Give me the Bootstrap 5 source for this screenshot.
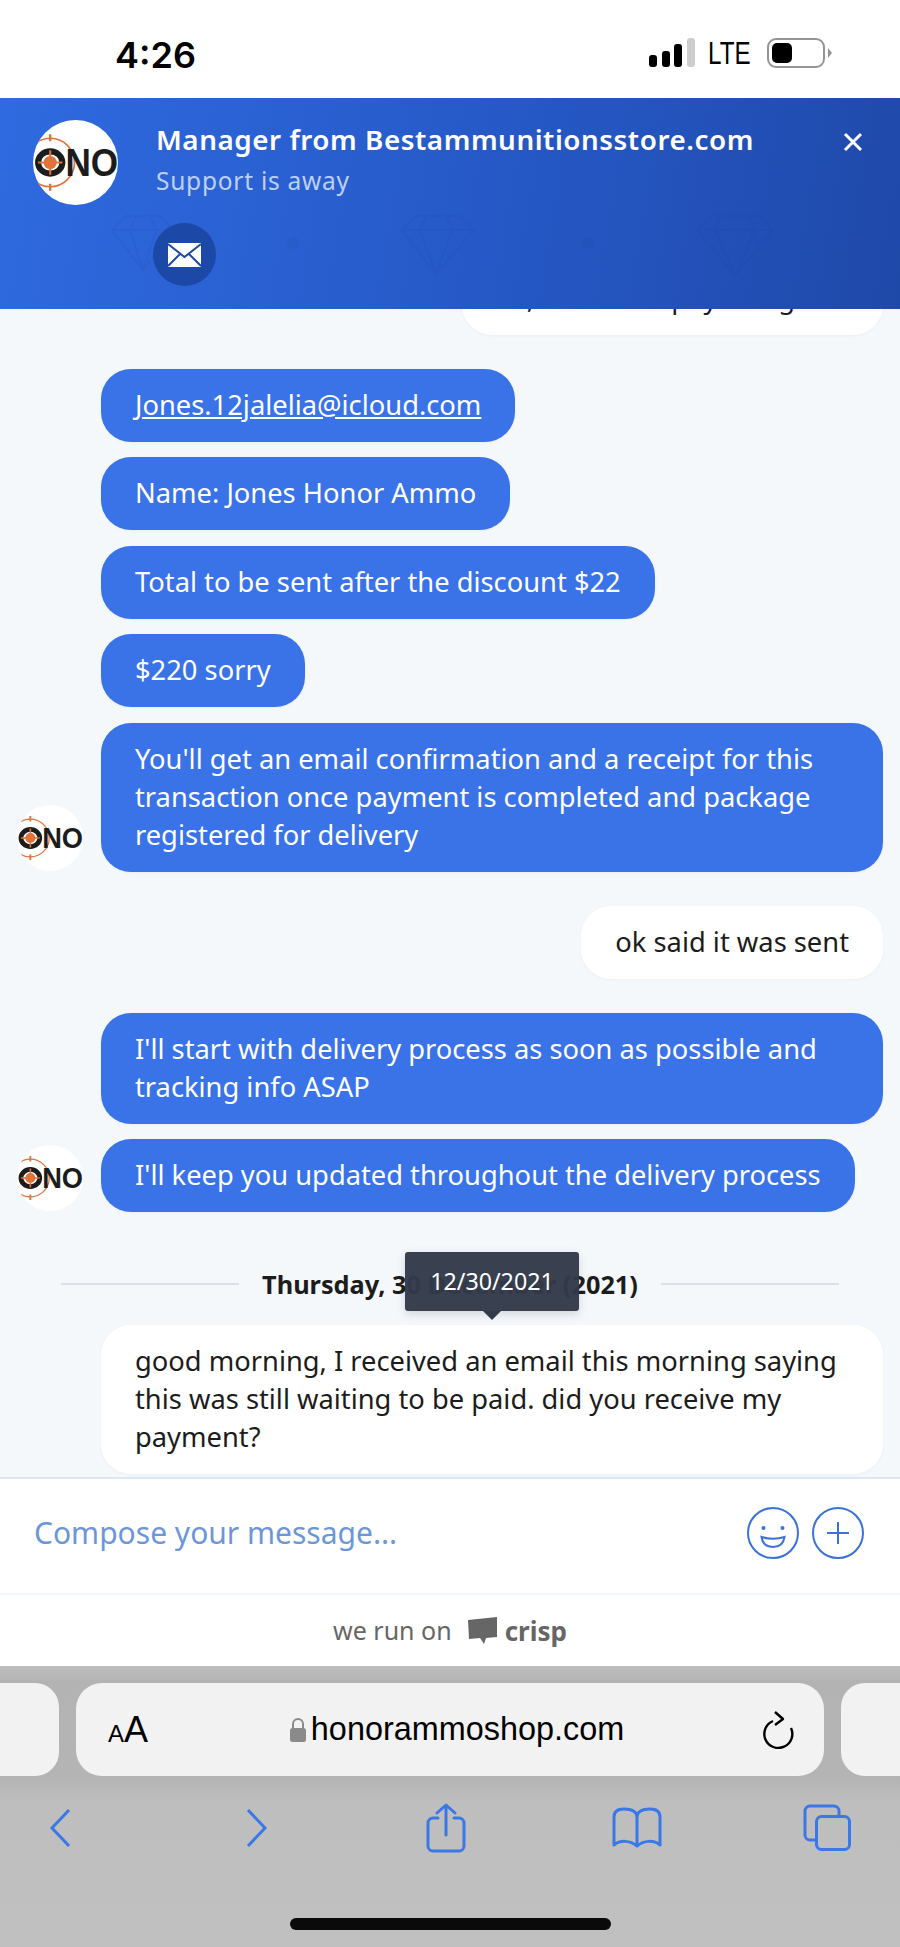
<!DOCTYPE html>
<html lang="en">
<head>
    <meta charset="UTF-8">
    <title>Chat</title>
    <link href="https://cdn.jsdelivr.net/npm/bootstrap@5.3.0/dist/css/bootstrap.min.css" rel="stylesheet">
    <style>
        html, body { height: 1947px; overflow: hidden; }
        body { font-family: "Noto Sans", sans-serif; background: #fff; }
        .screen { height: 1947px; }

        .status-bar { height: 98px; padding: 0 68px 0 115px; font-family: Inter, sans-serif; color: #000; }
        .status-time { font-size: 36px; font-weight: 600; line-height: 1; margin-top: 12px; }
        .status-icons { margin-top: 8px; }
        .status-lte { font-family: "Liberation Sans", sans-serif; font-size: 31px; line-height: 1; width: 45px; margin: 0 14px 0 13px; transform: scaleX(.78); transform-origin: left center; }

        .chat-head { height: 211px; background: linear-gradient(100deg, #2f6ae0 0%, #2557c4 60%, #1f49a9 100%); color: #fff; z-index: 2; }
        .head-pattern { left: 0; top: 0; width: 900px; height: 211px; }
        .head-avatar { left: 33px; top: 22px; width: 85px; height: 85px; }
        .head-title { left: 156px; top: 21px; font-size: 27.8px; font-weight: 600; line-height: 40px; letter-spacing: .55px; white-space: nowrap; }
        .head-sub { left: 156px; top: 65px; font-size: 24.5px; line-height: 36px; color: #bcd0f5; letter-spacing: .75px; }
        .head-mail { left: 153px; top: 125px; width: 63px; height: 63px; background: #1c48a8; border-radius: 50%; }
        .head-close { left: 842px; top: 33px; width: 22px; height: 22px; }

        .chat-body { height: 1168px; background: #f5f8fb; overflow: hidden; padding-bottom: 3px; }
        .msg { font-size: 27.3px; line-height: 38px; padding: 17px 34px 18px; border-radius: 30px; box-shadow: 0 1px 3px rgba(60, 80, 120, .06); max-width: 782px; }
        .msg a { color: #fff; }
        .msg-in { background: #3a72e8; color: #fff; }
        .msg-white { background: #fff; color: #1c1c1c; }
        .msg-left { margin-left: 101px; }
        .msg-right { margin-right: 17px; align-self: flex-end; }
        .gap-s { margin-top: 15.5px; }
        .gap-l { margin-top: 34px; }
        .gap-date { margin-top: 24px; }
        .msg-row { padding-left: 17px; }
        .msg-row .msg { margin-left: 18px; }
        .row-avatar { width: 66px; height: 66px; flex: none; margin-bottom: 1px; }

        .date-line { margin: 55px 61px 0; height: 34px; color: #1c1c1c; font-size: 25.3px; font-weight: 700; line-height: 34px; }
        .date-line i { flex: 1; height: 2px; background: #dde1e6; }
        .date-line span { padding: 0 23px; white-space: nowrap; }
        .date-tip { left: 344px; top: -15px; width: 174px; height: 59px; background: rgba(51, 58, 73, .97); color: #fff; border-radius: 3px; font-size: 23.2px; font-weight: 400; line-height: 58px; text-align: center; box-shadow: 0 3px 10px rgba(40, 50, 70, .18); }
        .date-tip::after { content: ""; position: absolute; left: 78px; top: 59px; border: 9px solid transparent; border-bottom: 0; border-top-color: #333a49; }

        .composer { height: 118px; padding: 0 36px 6px 34px; border-top: 2px solid #dce7f6; border-bottom: 2px solid #f3f6fa; background: #fff; }
        .composer-hint { font-size: 30px; color: #6d96d9; margin-bottom: 2px; }
        .composer-btns { gap: 13px; }
        .footer-line { height: 71px; color: #666; font-size: 25px; background: #fff; }
        .crisp-word { font-weight: 700; font-size: 26px; color: #666; line-height: 1; }

        .safari { height: 282px; background: linear-gradient(#bdbdbd 0, #b3b3b3 16px, #b4b4b4 112px, #bebebe 135px, #c0c0c0 100%); }
        .tab-strip { height: 93px; margin-top: 17px; }
        .tab-side { width: 59px; flex: none; background: #f2f2f2; }
        .tab-side-l { border-radius: 0 24px 24px 0; }
        .tab-side-r { border-radius: 24px 0 0 24px; }
        .tab-main { margin: 0 17px; background: #f2f2f2; border-radius: 26px; padding: 0 29px 0 32px; color: #000; }
        .tab-aa { font-family: "Liberation Sans", sans-serif; line-height: 1; width: 42px; white-space: nowrap; }
        .tab-aa small { font-size: 24px; }
        .tab-aa b { font-size: 36px; font-weight: 400; }
        .tab-url { font-family: "Liberation Sans", sans-serif; font-size: 32.4px; line-height: 1; }
        .tool-row { height: 51px; margin-top: 26px; padding-left: 49px; }
        .tool-fwd { margin-left: 172px; }
        .tool-share { margin-left: 158px; }
        .tool-book { margin-left: 146px; }
        .tool-tabs { margin-left: 141px; }
        .home-bar { width: 321px; height: 12px; background: #0a0a0a; border-radius: 6px; margin: 65px auto 0; }
    </style>
</head>
<body>
    <svg width="0" height="0" class="position-absolute">
        <symbol id="logo" viewBox="0 0 84 84">
            <clipPath id="logo-clip"><circle cx="42" cy="42" r="42"/></clipPath>
            <circle cx="42" cy="42" r="42" fill="#fff"/>
            <g clip-path="url(#logo-clip)">
                <ellipse cx="17" cy="42" rx="12" ry="11" fill="none" stroke="#1c1c1c" stroke-width="6"/>
                <circle cx="17" cy="42" r="6.5" fill="#e0743a"/>
                <path d="M17 30v24M5 42h24" stroke="#e0743a" stroke-width="2"/>
                <circle cx="17" cy="42" r="24" fill="none" stroke="#e0743a" stroke-width="1.6"/>
                <path d="M17 14v7M17 63v7" stroke="#e0743a" stroke-width="2.400"/>
                <text x="32" y="55" font-family="'Liberation Sans', sans-serif" font-weight="700" font-size="38" fill="#1c1c1c" textLength="52" lengthAdjust="spacingAndGlyphs">NO</text>
            </g>
        </symbol>
    </svg>

    <div class="screen d-flex flex-column">
        <!-- status bar -->
        <div class="status-bar d-flex align-items-center justify-content-between flex-shrink-0">
            <div class="status-time">4:26</div>
            <div class="status-icons d-flex align-items-center">
                <svg width="46" height="30" viewBox="0 0 46 30"><rect x="0" y="17" width="8" height="12" rx="3" fill="#000"/><rect x="13" y="13" width="8" height="16" rx="3" fill="#000"/><rect x="25" y="6" width="8" height="23" rx="3" fill="#000"/><rect x="38" y="0" width="8" height="29" rx="3" fill="#cdcdcd"/></svg>
                <span class="status-lte">LTE</span>
                <svg width="65" height="30" viewBox="0 0 65 30"><rect x="1" y="1" width="56" height="28" rx="8" fill="#fff" stroke="#959595" stroke-width="2"/><rect x="5" y="5" width="20" height="20" rx="5" fill="#000"/><path d="M61 10l4 5-4 5z" fill="#959595"/></svg>
            </div>
        </div>

        <!-- chat header -->
        <div class="chat-head position-relative flex-shrink-0">
            <svg class="head-pattern position-absolute" viewBox="0 0 900 211" fill="none" stroke="#1d49a8" stroke-opacity=".13" stroke-width="2">
                <path d="M112 132l14-14h34l14 14-31 40zM112 132h62M136 118l-6 14 13 40 13-40-6-14"/>
                <path d="M402 132l14-14h44l14 14-38 44zM402 132h72M426 118l-6 14 16 44 16-44-6-14"/>
                <path d="M697 132l14-14h48l14 14-38 46zM697 132h76M721 118l-6 14 20 46 20-46-6-14"/>
                <circle cx="293" cy="145" r="6" fill="#1d49a8" fill-opacity=".15" stroke="none"/>
                <circle cx="588" cy="145" r="6" fill="#1d49a8" fill-opacity=".15" stroke="none"/>
            </svg>
            <svg class="head-avatar position-absolute"><use href="#logo"/></svg>
            <div class="head-title position-absolute">Manager from Bestammunitionsstore.com</div>
            <div class="head-sub position-absolute">Support is away</div>
            <div class="head-mail position-absolute d-flex align-items-center justify-content-center">
                <svg width="33" height="24" viewBox="0 0 33 24"><path d="M0 0h33v24H0z" fill="#fff"/><path d="M0 1l16.500 13L33 1M0 23l12-12M33 23L21 11" fill="none" stroke="#1c48a8" stroke-width="2"/></svg>
            </div>
            <svg class="head-close position-absolute" viewBox="0 0 22 22"><path d="M3 3l16 16M19 3L3 19" stroke="#fff" stroke-width="3"/></svg>
        </div>

        <!-- messages -->
        <div class="chat-body d-flex flex-column justify-content-end flex-shrink-0">
            <div class="msg msg-white msg-right">ok, I can now pay using this</div>
            <div class="msg msg-in msg-left align-self-start gap-l"><a href="#">Jones.12jalelia@icloud.com</a></div>
            <div class="msg msg-in msg-left align-self-start gap-s">Name: Jones Honor Ammo</div>
            <div class="msg msg-in msg-left align-self-start gap-s">Total to be sent after the discount $22</div>
            <div class="msg msg-in msg-left align-self-start gap-s">$220 sorry</div>
            <div class="msg-row d-flex align-items-end gap-s">
                <svg class="row-avatar"><use href="#logo"/></svg>
                <div class="msg msg-in">You'll get an email confirmation and a receipt for this transaction once payment is completed and package registered for delivery</div>
            </div>
            <div class="msg msg-white msg-right gap-l">ok said it was sent</div>
            <div class="msg msg-in msg-left align-self-start gap-l">I'll start with delivery process as soon as possible and tracking info ASAP</div>
            <div class="msg-row d-flex align-items-end gap-s">
                <svg class="row-avatar"><use href="#logo"/></svg>
                <div class="msg msg-in">I'll keep you updated throughout the delivery process</div>
            </div>
            <div class="date-line d-flex align-items-center position-relative">
                <i></i><span>Thursday, 30 December (2021)</span><i></i>
                <div class="date-tip position-absolute">12/30/2021</div>
            </div>
            <div class="msg msg-white msg-left align-self-start gap-date">good morning, I received an email this morning saying this was still waiting to be paid. did you receive my payment?</div>
        </div>

        <!-- composer -->
        <div class="composer d-flex align-items-center justify-content-between flex-shrink-0">
            <div class="composer-hint">Compose your message...</div>
            <div class="composer-btns d-flex">
                <svg width="52" height="52" viewBox="0 0 52 52" fill="none" stroke="#3a72d8" stroke-width="2"><circle cx="26" cy="26" r="25"/><circle cx="16.500" cy="21" r="2" fill="#3a72d8" stroke="none"/><circle cx="35.500" cy="21" r="2" fill="#3a72d8" stroke="none"/><path d="M14.500 30Q26 33.500 37.500 30Q36 40 26 40Q16 40 14.500 30z"/></svg>
                <svg width="52" height="52" viewBox="0 0 52 52" fill="none" stroke="#3a72d8" stroke-width="2"><circle cx="26" cy="26" r="25"/><path d="M26 15v22M15 26h22"/></svg>
            </div>
        </div>
        <div class="footer-line d-flex align-items-center justify-content-center flex-shrink-0">
            <span>we run on</span>
            <svg class="ms-3" width="29" height="27" viewBox="0 0 29 27"><path d="M0 3l29-3v20l-11 1-2 6-4-6-11 1z" fill="#666"/></svg>
            <span class="crisp-word ms-2">crisp</span>
        </div>

        <!-- safari chrome -->
        <div class="safari flex-grow-1">
            <div class="tab-strip d-flex">
                <div class="tab-side tab-side-l"></div>
                <div class="tab-main flex-grow-1 d-flex align-items-center justify-content-between">
                    <div class="tab-aa"><small>A</small><b>A</b></div>
                    <div class="d-flex align-items-center">
                        <svg width="18" height="26" viewBox="0 0 18 26"><path d="M4 12V7a5 5 0 0 1 10 0v5" fill="none" stroke="#8a8a8a" stroke-width="2"/><rect x="1" y="11" width="16" height="14" rx="2.500" fill="#8a8a8a"/></svg>
                        <span class="tab-url ms-1">honorammoshop.com</span>
                    </div>
                    <svg width="32" height="38" viewBox="0 0 32 38" fill="none" stroke="#000" stroke-width="2.400"><path d="M10 10a14 14 0 1 0 18 7"/><path d="M12 1l8 7-8 6" stroke-linejoin="round"/></svg>
                </div>
                <div class="tab-side tab-side-r"></div>
            </div>
            <div class="tool-row d-flex align-items-center">
                <svg width="23" height="40" viewBox="0 0 23 40" fill="none" stroke="#3a78e8" stroke-width="3"><path d="M20 2L3 20l17 18"/></svg>
                <svg class="tool-fwd" width="24" height="40" viewBox="0 0 24 40" fill="none" stroke="#3a78e8" stroke-width="3"><path d="M4 2l17 18L4 38"/></svg>
                <svg class="tool-share" width="40" height="50" viewBox="0 0 40 50" fill="none" stroke="#3a78e8" stroke-width="3" stroke-linecap="round" stroke-linejoin="round"><path d="M12 15H7a5 5 0 0 0-5 5v23a5 5 0 0 0 5 5h26a5 5 0 0 0 5-5V20a5 5 0 0 0-5-5h-5M20 32V2M11 10l9-8 9 8"/></svg>
                <svg class="tool-book" width="50" height="42" viewBox="0 0 50 42" fill="none" stroke="#3a78e8" stroke-width="3" stroke-linejoin="round"><path d="M25 10C25 5 20 2 12 2 5 2 2 5 2 10V38C8 33 18 33 25 39 32 33 42 33 48 38V10C48 5 45 2 38 2 30 2 25 5 25 10zM25 10V38"/></svg>
                <svg class="tool-tabs" width="48" height="47" viewBox="0 0 48 47" fill="none" stroke="#3a78e8" stroke-width="3"><path d="M36 11V7a5 5 0 0 0-5-5H7a5 5 0 0 0-5 5v24a5 5 0 0 0 5 5h5"/><rect x="13.500" y="12.500" width="33" height="33" rx="5"/></svg>
            </div>
            <div class="home-bar"></div>
        </div>
    </div>
</body>
</html>
